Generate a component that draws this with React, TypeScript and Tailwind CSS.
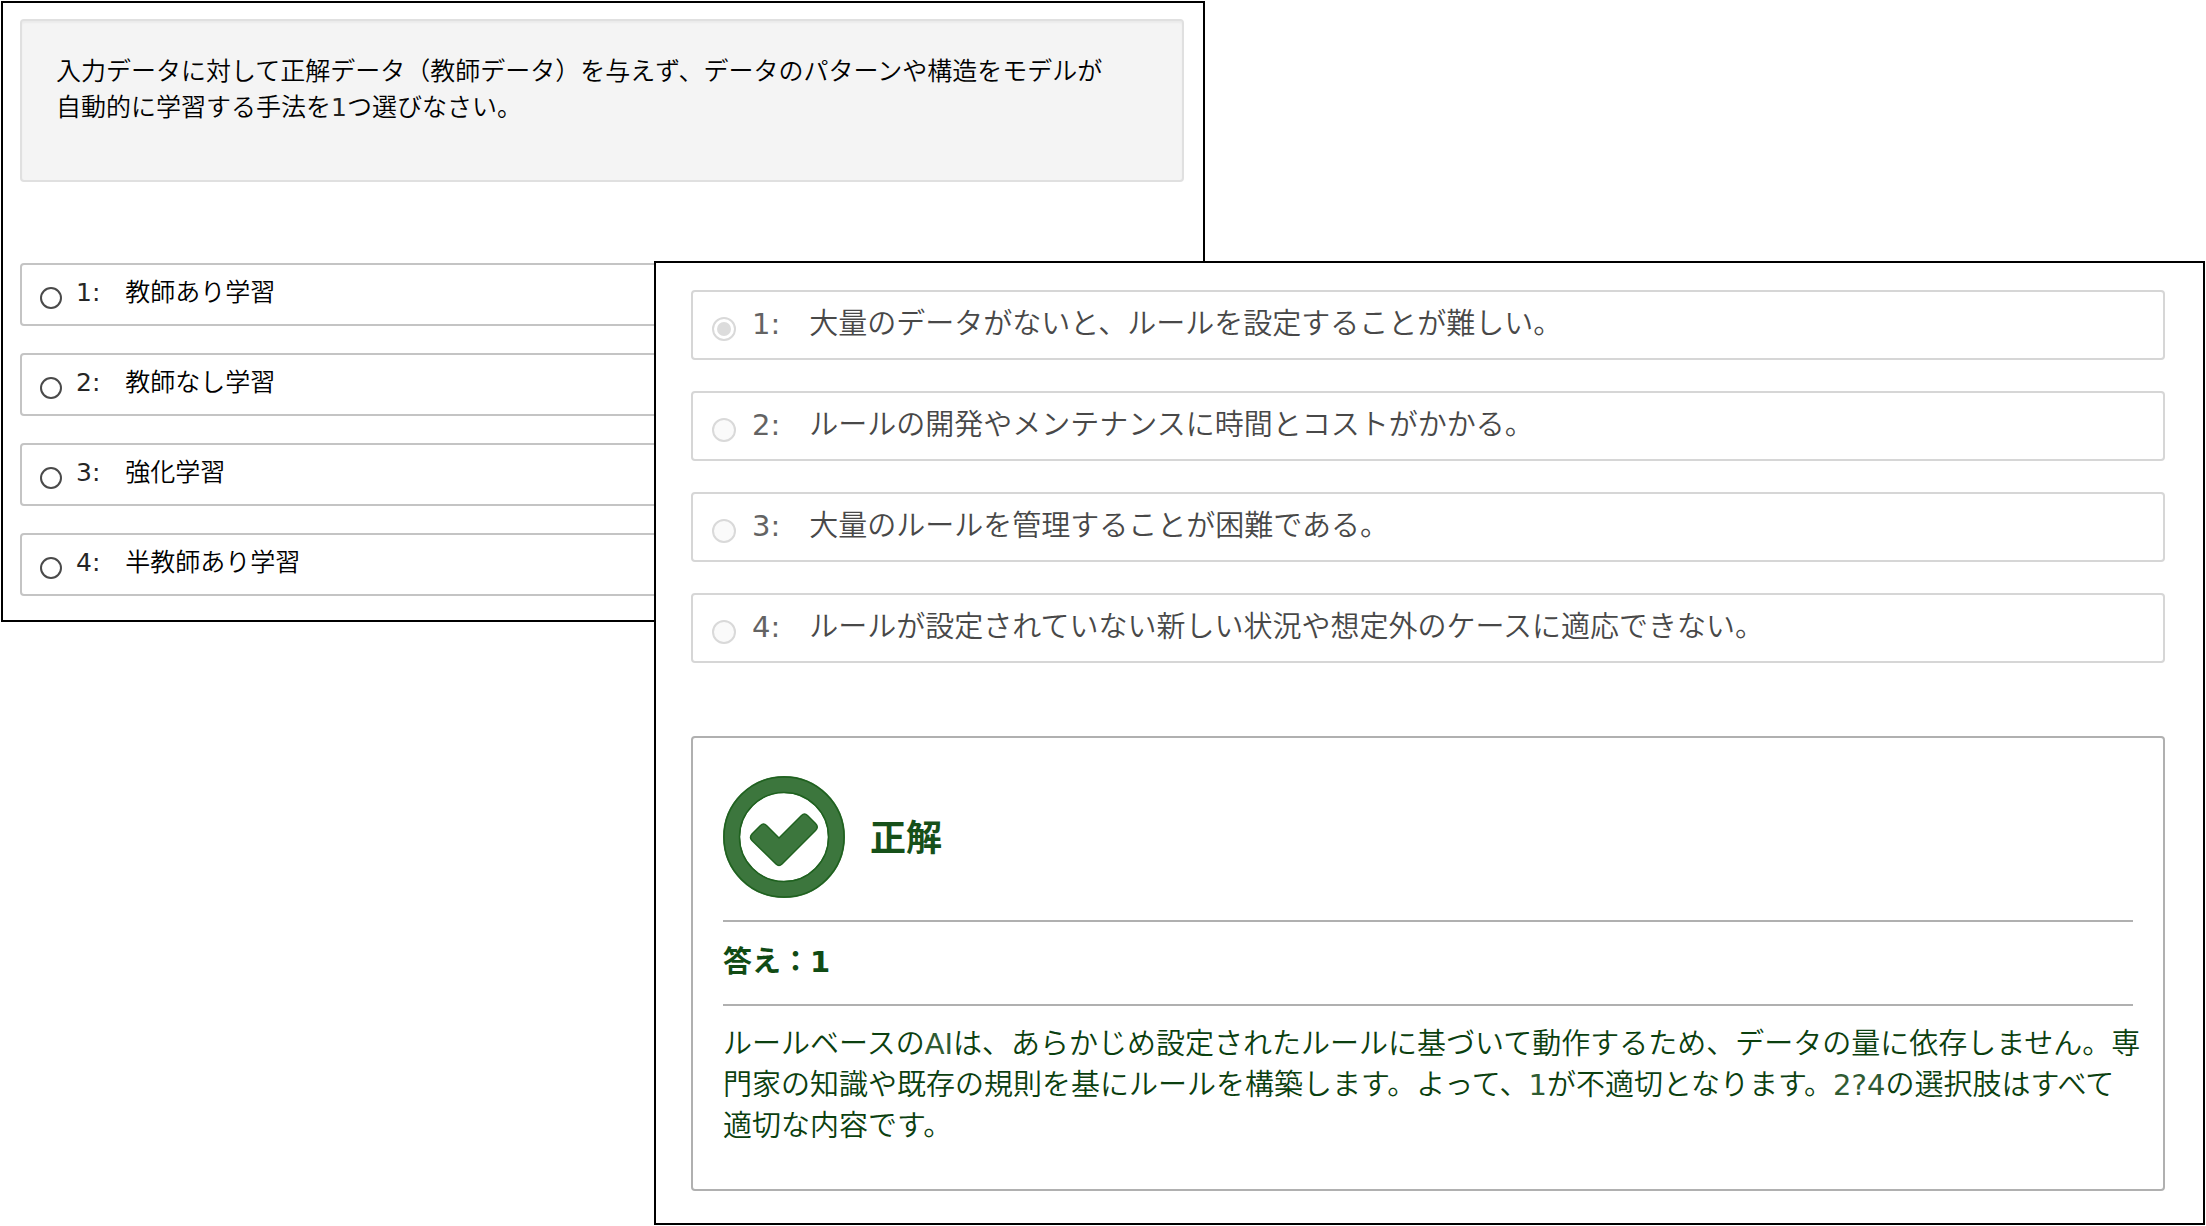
const choices = ['教師あり学習', '教師なし学習', '強化学習', '半教師あり学習'];

const reviewed = [
  '大量のデータがないと、ルールを設定することが難しい。',
  'ルールの開発やメンテナンスに時間とコストがかかる。',
  '大量のルールを管理することが困難である。',
  'ルールが設定されていない新しい状況や想定外のケースに適応できない。',
];

const explanation = [
  'ルールベースのAIは、あらかじめ設定されたルールに基づいて動作するため、データの量に依存しません。専',
  '門家の知識や既存の規則を基にルールを構築します。よって、1が不適切となります。2?4の選択肢はすべて',
  '適切な内容です。',
];

/** Japanese text in a light weight, with its Latin runs in the regular one. */
function Mixed({ text }: { text: string }) {
  return (
    <>
      {text.split(/([!-~]+)/).map((part, i) =>
        i % 2 ? (
          <span key={i} className="font-normal opacity-85">
            {part}
          </span>
        ) : (
          part
        ),
      )}
    </>
  );
}

function QuestionPanel() {
  return (
    <section className="col-start-1 row-start-1 mt-px ml-px w-[54.6%] border-2 border-black bg-white pt-4 pr-[19px] pb-6 pl-[17px] text-[25px] text-black">
      <p className="mb-[81px] h-[163px] rounded border-2 border-[#e0e0e0] bg-[#f4f4f4] px-[34px] pt-[33px] leading-9 shadow-[inset_0_2px_2px_rgba(0,0,0,0.04)]">
        入力データに対して正解データ（教師データ）を与えず、データのパターンや構造をモデルが
        <br />
        <Mixed text="自動的に学習する手法を1つ選びなさい。" />
      </p>
      <div role="radiogroup" className="flex flex-col gap-[27px]">
        {choices.map((text, i) => (
          <label
            key={text}
            className="flex h-[63px] items-start rounded border-2 border-[#c4c4c4] pt-[10px] pl-[18px] leading-9 whitespace-nowrap"
          >
            <input
              type="radio"
              name="method"
              className="mt-3 mr-[14px] size-[22px] shrink-0 appearance-none rounded-full border-2 border-[#4a4a4a] bg-white"
            />
            <span>
              <Mixed text={`${i + 1}:　${text}`} />
            </span>
          </label>
        ))}
      </div>
    </section>
  );
}

function CorrectIcon() {
  return (
    <svg viewBox="0 0 122 122" className="size-[122px] shrink-0" aria-hidden="true">
      <circle cx="61" cy="61" r="52.5" fill="none" stroke="#3c763d" strokeWidth="17" />
      <circle cx="61" cy="61" r="60" fill="none" stroke="#1f611f" strokeWidth="1.5" />
      <circle cx="61" cy="61" r="44.5" fill="none" stroke="#1f611f" strokeWidth="1.5" />
      <path
        d="M29 58 L37.5 49.5 Q40.5 46.5 43.5 49.5 L56 62 L78.5 39.5 Q81.5 36.5 84.5 39.5 L92.5 47.5 Q96 51 92.5 54.5 L59 88 Q56 91 53 88 L29 64.5 Q26 61.5 29 58 Z"
        fill="#3c763d"
        stroke="#1f611f"
        strokeWidth="1.5"
      />
    </svg>
  );
}

function ResultPanel() {
  return (
    <section className="col-start-1 row-start-1 mt-[261px] mr-px ml-[29.65%] border-2 border-black bg-white pt-[27px] pr-[38px] pb-8 pl-[35px] text-[29px]">
      <div role="radiogroup" className="flex flex-col gap-[31px] text-[#484848]">
        {reviewed.map((text, i) => (
          <label
            key={text}
            className="flex h-[70px] items-start rounded border-2 border-[#d6d6d6] pt-3 pl-[19px] leading-[41px] whitespace-nowrap"
          >
            <input
              type="radio"
              name="reviewed"
              disabled
              defaultChecked={i === 0}
              className="mt-[13px] mr-4 size-6 shrink-0 appearance-none rounded-full border-2 border-[#d9d9d9] bg-[#fafafa] p-[3px] checked:bg-[#dcdcdc] checked:bg-clip-content"
            />
            <span>
              <Mixed text={`${i + 1}:　${text}`} />
            </span>
          </label>
        ))}
      </div>
      <div className="mt-[73px] rounded border-2 border-[#b0b0b0] px-[30px] pt-[38px] pb-[42px] text-[#0b400f]">
        <div className="flex items-center gap-[25px] pb-[22px]">
          <CorrectIcon />
          <h2 className="pt-1 text-[36px] font-bold text-[#165019]">正解</h2>
        </div>
        <p className="h-[86px] border-y-2 border-[#b0b0b0] pt-5 leading-[41px] font-bold text-[#114b14]">答え：1</p>
        <p className="pt-[18px] leading-[41px] whitespace-nowrap">
          {explanation.map((line) => (
            <span key={line} className="block">
              <Mixed text={line} />
            </span>
          ))}
        </p>
      </div>
    </section>
  );
}

export default function App() {
  return (
    <main
      lang="ja"
      className="grid min-h-screen grid-cols-1 items-start bg-white font-['DejaVu_Sans','Noto_Sans_CJK_JP',sans-serif] font-[350]"
    >
      <QuestionPanel />
      <ResultPanel />
    </main>
  );
}
